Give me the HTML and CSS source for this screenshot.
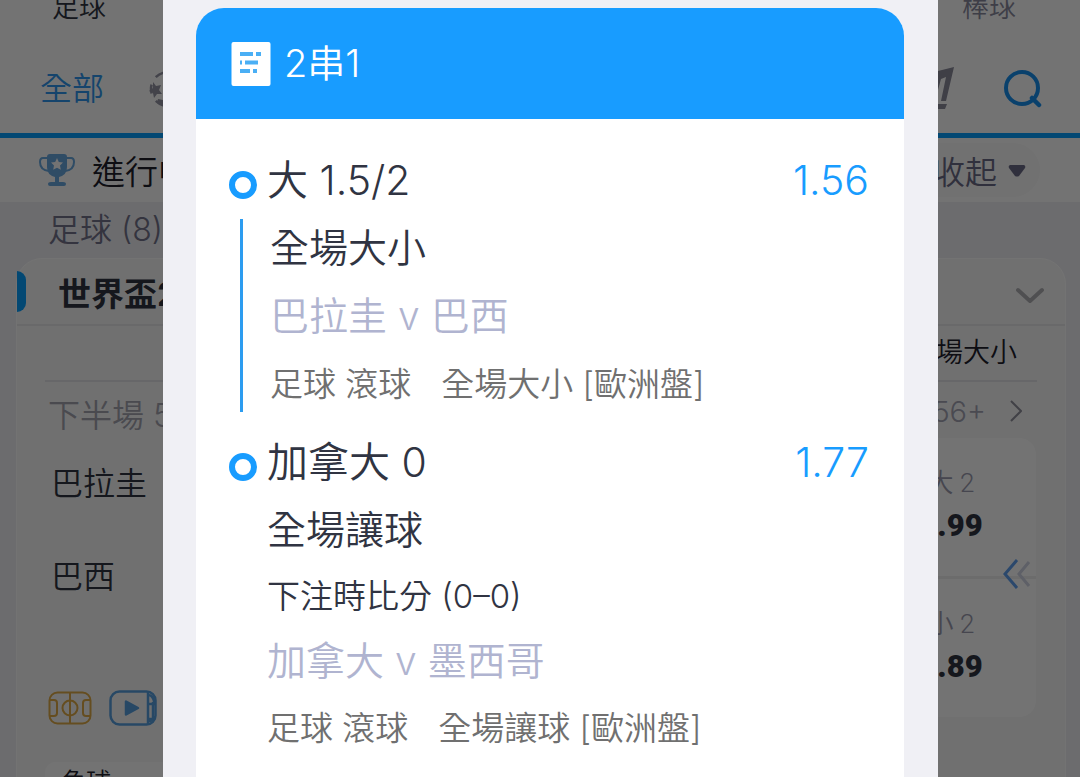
FILE: index.html
```html
<!DOCTYPE html>
<html lang="zh-Hant">
<head>
<meta charset="utf-8">
<meta name="viewport" content="width=device-width, initial-scale=1">
<title>2串1</title>
<link rel="stylesheet" href="styles.css">
</head>
<body>
<div class="page">
  <header class="top">
    <nav class="sports">
      <a class="sport sport-active" href="#soccer">足球</a>
      <a class="sport" href="#baseball">棒球</a>
    </nav>
    <div class="filters">
      <a class="filter-all" href="#all">全部</a>
      <svg class="ball" viewBox="0 0 38 38" aria-hidden="true">
        <circle cx="19" cy="19" r="17" fill="none" stroke="currentColor" stroke-width="2.500" stroke-dasharray="9 8.500" stroke-dashoffset="4"/>
        <path d="M4 12l3 4 5-1-2 5 3 4-5 0-3 4-1-5-4-2 4-3zM9 29l5 1 0 6-6-3zM19 12l7 5-3 8h-6l-3-8z" fill="currentColor"/>
      </svg>
      <span class="filter-space"></span>
      <svg class="bang" viewBox="0 0 40 44" aria-hidden="true">
        <path d="M24 4l16-4-8 34h-5l5-24-5 2-6 22h-6zM23 37h10l-2 5h-9z" fill="currentColor"/>
      </svg>
      <button class="search" type="button" aria-label="搜尋">
        <svg viewBox="0 0 38 40" aria-hidden="true">
          <circle cx="18" cy="19" r="16" fill="none" stroke="currentColor" stroke-width="4"/>
          <path d="M28 29l7 7" stroke="currentColor" stroke-width="4.500" stroke-linecap="round"/>
        </svg>
      </button>
    </div>
  </header>

  <div class="live">
    <svg class="trophy" viewBox="0 0 36 34" aria-hidden="true">
      <path d="M9 5H4q-3 0-3 4 0 8 9 9M27 5h5q3 0 3 4 0 8-9 9" fill="none" stroke="currentColor" stroke-width="2"/>
      <path d="M8 4q0-3 3-3h14q3 0 3 3v10q0 8-8 10v5h4q3 0 3 2t-2 2H11q-2 0-2-2t3-2h4v-5q-8-2-8-10z" fill="currentColor"/>
      <path class="trophy-star" d="M18 5l1.800 4 4.200.5-3 3 .8 4.200-3.800-2-3.800 2 .8-4.200-3-3 4.200-.5z"/>
    </svg>
    <span class="live-title">進行中</span>
    <button class="collapse" type="button">收起
      <svg class="caret" viewBox="0 0 18 13" aria-hidden="true"><path d="M2 1h14q2 1 1 3l-6 8q-2 1-4 0L1 4Q0 2 2 1z" fill="currentColor"/></svg>
    </button>
  </div>

  <h2 class="group">足球 (8)</h2>

  <section class="league">
    <div class="league-head">
      <span class="league-mark"></span>
      <h3 class="league-name">世界盃2</h3>
      <svg class="chevron-down" viewBox="0 0 30 18" aria-hidden="true"><path d="M3 3l12 11L27 3" fill="none" stroke="currentColor" stroke-width="4" stroke-linecap="round" stroke-linejoin="round"/></svg>
    </div>
    <div class="market-head">全場大小</div>
    <div class="match">
      <div class="match-info">
        <p class="period">下半場 5</p>
        <p class="team">巴拉圭</p>
        <p class="team">巴西</p>
        <div class="media">
          <svg class="pitch" viewBox="0 0 44 34" fill="none" stroke="currentColor" stroke-width="2" aria-hidden="true">
            <rect x="1.500" y="1.500" width="41" height="31" rx="8"/>
            <circle cx="22" cy="17" r="7.500"/>
            <path d="M22 1v32M1 9h5q3 0 3 3v10q0 3-3 3H1M43 9h-5q-3 0-3 3v10q0 3 3 3h5"/>
          </svg>
          <svg class="video" viewBox="0 0 48 36" fill="none" stroke="currentColor" stroke-width="2.500" aria-hidden="true">
            <rect x="1.500" y="1.500" width="45" height="33" rx="9"/>
            <path d="M39 2v32"/>
            <path d="M40 5q4 1 5 6v3h-5M40 31q4 0 5-5v3h-5M44 12v16"/>
            <path d="M17 11.500v13l12-6.500z" fill="currentColor" stroke-linejoin="round"/>
          </svg>
        </div>
        <span class="chip">角球</span>
      </div>
      <div class="match-odds">
        <a class="more" href="#more">56+
          <svg class="chevron-right" viewBox="0 0 12 22" aria-hidden="true"><path d="M1 1l10 10L1 21" fill="none" stroke="currentColor" stroke-width="2"/></svg>
        </a>
        <div class="odds">
          <button class="odd" type="button"><span class="odd-label">大 2</span><strong class="odd-value">1.99</strong></button>
          <button class="odd" type="button"><span class="odd-label">小 2</span><strong class="odd-value">1.89</strong></button>
          <svg class="swipe" viewBox="0 0 32 32" fill="none" aria-hidden="true">
            <path class="swipe-near" d="M14 2L2 16l12 14"/>
            <path class="swipe-far" d="M26 4L16 16l10 12"/>
          </svg>
        </div>
      </div>
    </div>
  </section>
</div>

<div class="overlay">
  <div class="sheet" role="dialog" aria-label="2串1">
    <article class="ticket">
      <header class="ticket-head">
        <svg class="slip" viewBox="0 0 40 46" aria-hidden="true">
          <rect x="0.500" y="1" width="39" height="44" rx="2" fill="#fff"/>
          <path d="M9 13h13M25 13h5M9 21.500h2M14 21.500h13M9 30h10M22 30h4" stroke="#4aaff5" stroke-width="4"/>
        </svg>
        <h1 class="ticket-title">2串1</h1>
      </header>
      <ol class="legs">
        <li class="leg">
          <div class="track"><span class="ring"></span><span class="line"></span></div>
          <div class="leg-body">
            <div class="pick"><span>大 1.5/2</span><span class="price">1.56</span></div>
            <div class="details details-inset">
              <p class="market">全場大小</p>
              <p class="teams">巴拉圭 v 巴西</p>
              <p class="meta"><span>足球 滾球</span><span>全場大小 [歐洲盤]</span></p>
            </div>
          </div>
        </li>
        <li class="leg">
          <div class="track"><span class="ring"></span></div>
          <div class="leg-body">
            <div class="pick"><span>加拿大 0</span><span class="price">1.77</span></div>
            <div class="details">
              <p class="market">全場讓球</p>
              <p class="score">下注時比分 (0–0)</p>
              <p class="teams">加拿大 v 墨西哥</p>
              <p class="meta"><span>足球 滾球</span><span>全場讓球 [歐洲盤]</span></p>
            </div>
          </div>
        </li>
      </ol>
    </article>
  </div>
</div>
</body>
</html>
```
FILE: styles.css
```css
* { box-sizing: border-box; }

body {
  margin: 0;
  overflow: hidden;
  background: #f0f0f4;
  color: #303442;
  font-family: Inter, "Noto Sans CJK TC", sans-serif;
  font-weight: 350;
}

h1, h2, h3, p, ol { margin: 0; padding: 0; font-weight: inherit; }
ol { list-style: none; }
a { color: inherit; text-decoration: none; }
button { padding: 0; border: 0; background: none; color: inherit; font: inherit; }
svg { display: block; flex: none; }

.page { height: 100vh; overflow: hidden; }

/* Sport tabs and filters */
.top { background: #fff; border-bottom: 5px solid #08a0ff; }
.sports {
  display: flex;
  justify-content: space-between;
  height: 44px;
  padding: 0 64px 0 52px;
  color: #8a8a9e;
  font-size: 27px;
  line-height: 16px;
}
.sport-active { color: #303442; }
.filters {
  display: flex;
  align-items: center;
  height: 89px;
  padding: 0 38px 0 40px;
  font-size: 32px;
}
.filter-all { padding-bottom: 6px; color: #3098f0; }
.ball { width: 38px; height: 38px; margin-left: 45px; color: #9494a4; }
.filter-space { flex: 1; }
.bang { width: 40px; height: 44px; margin-right: 50px; color: #8c8c9c; }
.search { color: #1890f0; }
.search svg { width: 38px; height: 40px; }

/* Live bar */
.live {
  display: flex;
  align-items: center;
  height: 64px;
  padding: 0 40px 0 39px;
  background: #fff;
  font-size: 33px;
}
.trophy { width: 36px; height: 34px; margin-right: 17px; color: #68a8e0; }
.trophy-star { fill: #fff; }
.live-title { color: #20202c; }
.collapse {
  display: flex;
  align-items: center;
  gap: 11px;
  height: 54px;
  margin-left: auto;
  padding: 0 14px 0 28px;
  border-radius: 27px;
  background: #fafafa;
  color: #6c6c88;
  font-size: 32px;
}
.caret { width: 18px; height: 13px; }

.group { padding-left: 48px; color: #74748c; font-size: 32px; line-height: 56px; }

/* League card */
.league {
  margin: 0 14px 0 16px;
  border: 1px solid #fff;
  border-radius: 26px;
  background: #f9f9f9;
}
.league-head {
  display: flex;
  align-items: center;
  height: 67px;
  padding-right: 20px;
  border-bottom: 2px solid #e8e8ec;
}
.league-mark { width: 9px; height: 41px; border-radius: 0 9px 9px 0; background: #08a0ff; }
.league-name { flex: 1; padding-left: 32px; color: #303442; font-size: 33px; font-weight: 700; }
.chevron-down { width: 30px; height: 18px; margin-top: 8px; color: #b0b0b4; }
.market-head {
  margin: 0 28px;
  padding-right: 20px;
  border-bottom: 2px solid #e4e4e8;
  color: #20202c;
  font-size: 27px;
  line-height: 54px;
  text-align: right;
}
.match { display: flex; justify-content: space-between; padding: 0 29px 0 28px; }
.period { padding-left: 3px; color: #a4a4b0; font-size: 32px; line-height: 68px; }
.team { padding-left: 6px; font-size: 32px; line-height: 94px; }
.period + .team { line-height: 68px; }
.team + .team { padding-top: 12px; }
.media { display: flex; align-items: center; gap: 17px; padding: 66px 0 0 3px; }
.pitch { width: 44px; height: 34px; color: #e0ac48; }
.video { width: 48px; height: 36px; color: #58a0e0; }
.chip {
  display: block;
  margin-top: 36px;
  padding: 0 16px;
  border-radius: 10px;
  background: #fff;
  color: #20202c;
  font-size: 25px;
  line-height: 40px;
}
.more {
  display: flex;
  align-items: center;
  justify-content: flex-end;
  gap: 24px;
  height: 56px;
  padding: 2px 14px 0 0;
  color: #a4a4b4;
  font-size: 29px;
}
.chevron-right { width: 12px; height: 22px; color: #90909c; }
.odds { position: relative; display: grid; gap: 3px; width: 170px; background: #f0f0f0; border-radius: 16px; }
.odd {
  display: flex;
  flex-direction: column;
  align-items: center;
  height: 138px;
  padding-top: 25px;
  background: #fff;
  border-radius: 16px 16px 0 0;
}
.odd + .odd { border-radius: 0 0 16px 16px; }
.odd-label { color: #9c9cb0; font-family: Roboto, "Noto Sans CJK TC", sans-serif; font-size: 26px; line-height: 40px; }
.odd-value { color: #303442; font-family: Roboto, sans-serif; font-size: 31px; font-weight: 900; line-height: 46px; }
.swipe { position: absolute; right: 1px; top: 120px; width: 32px; height: 32px; stroke-width: 3; }
.swipe-near { stroke: #60a0f0; }
.swipe-far { stroke: #d0d4e4; }

/* Bet slip */
.overlay {
  position: fixed;
  inset: 0;
  display: flex;
  padding: 0 142px 0 163px;
  background: rgba(0, 0, 0, 0.55);
}
.sheet { flex: 1; padding: 8px 34px 0 33px; background: #f0f0f5; }
.ticket { min-height: 100%; border-radius: 28px 28px 0 0; overflow: hidden; background: #fff; }
.ticket-head {
  display: flex;
  align-items: center;
  gap: 13px;
  height: 111px;
  padding-left: 35px;
  background: #189cff;
  color: #fff;
}
.slip { width: 40px; height: 46px; }
.ticket-title { padding-bottom: 6px; font-size: 38px; }
.legs { display: grid; gap: 10px; padding: 27px 35px 27px 33px; }
.leg { display: grid; grid-template-columns: 28px 1fr; gap: 10px; }
.track { display: flex; flex-direction: column; align-items: center; padding-top: 25px; }
.ring { width: 28px; height: 28px; border: 6px solid #189cff; border-radius: 50%; }
.line { flex: 1; width: 3px; margin: 20px 3px 6px 0; background: #2c9cf0; }
.pick { display: flex; justify-content: space-between; font-size: 41px; line-height: 68px; }
.price { color: #189cff; }
.details { font-size: 39px; line-height: 68px; }
.details-inset { padding-left: 3px; }
.teams { color: #b0b4d0; }
.score { font-size: 33px; line-height: 64px; }
.score + .teams { line-height: 66px; }
.meta { display: flex; gap: 30px; color: #707070; font-size: 33px; white-space: nowrap; }
```
